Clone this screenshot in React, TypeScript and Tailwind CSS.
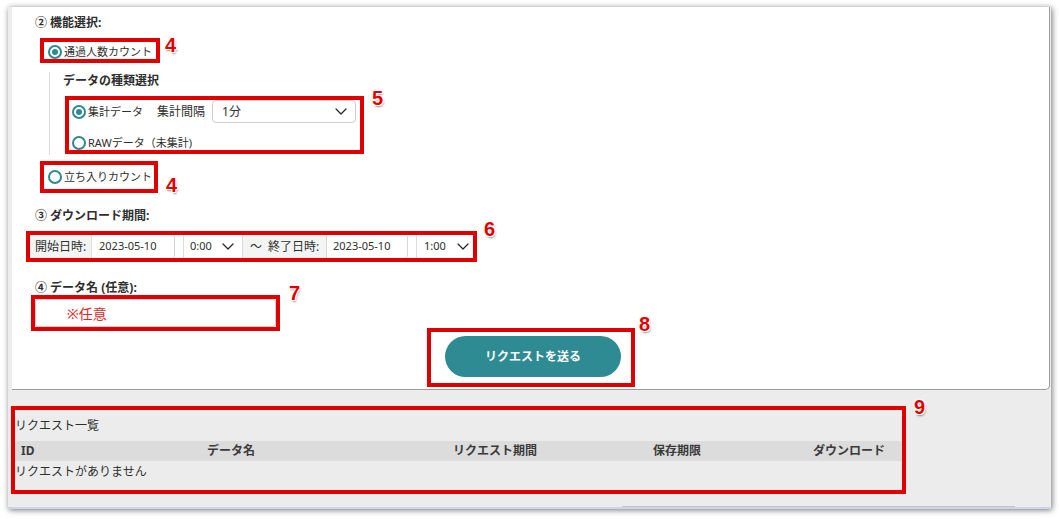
import { ReactNode } from "react";

/* 赤枠の番号 */
function Num({ n, className }: { n: string; className: string }) {
  return (
    <span
      className={
        "absolute font-['Liberation_Sans',Arial,sans-serif] text-[20px] leading-[20px] font-bold text-[#e00000] [text-shadow:-1px_-1px_0_#fff,1px_-1px_0_#fff,-1px_1px_0_#fff,1px_1px_0_#fff,1px_2px_2px_rgba(0,0,0,0.45)] " +
        className
      }
    >
      {n}
    </span>
  );
}

function Radio({ checked }: { checked?: boolean }) {
  return (
    <span className="flex h-[14px] w-[14px] shrink-0 items-center justify-center rounded-full border-2 border-[#2d8a92] bg-white">
      {checked && <span className="h-[6px] w-[6px] rounded-full bg-[#2d8a92]" />}
    </span>
  );
}

function Chevron() {
  return (
    <svg width="12" height="7" viewBox="0 0 12 7" fill="none">
      <path d="M1 1l5 5 5-5" stroke="#222" strokeWidth="1.2" strokeLinecap="round" strokeLinejoin="round" />
    </svg>
  );
}

function Title({ children, className }: { children: ReactNode; className: string }) {
  return <div className={"text-[12px] leading-[16px] font-bold text-[#2e2e2e] " + className}>{children}</div>;
}

function App() {
  return (
    <div className="h-[519px] w-[1059px] overflow-hidden bg-white pt-[7px] pl-[8px] font-['Noto_Sans','Noto_Sans_CJK_JP',sans-serif] text-[#2e2e2e]">
      <div className="flex h-[502px] w-[1043px] flex-col bg-[#ececec] shadow-[1px_1px_6px_rgba(0,0,0,0.55)]">
        {/* form card */}
        <div className="ml-[4px] flex h-[383px] w-[1038px] shrink-0 flex-col rounded-br-[5px] border-r border-b border-[#9c9c9c] bg-white">
          <Title className="mt-[8px] ml-[23px]">② 機能選択:</Title>

          <div className="relative mt-[7px] ml-[28px] flex h-[25px] w-[120px] items-center border-4 border-[#e00000] pt-[3px] pl-[4px]">
            <Radio checked />
            <span className="ml-[2px] text-[11px] leading-[14px]">通過人数カウント</span>
            <Num n="4" className="top-[-7px] left-[calc(100%+9px)]" />
          </div>

          <div className="mt-[9px] ml-[37px] h-[83px] border-l border-[#dcdcdc] pl-[13px]">
            <Title className="mt-[1px]">データの種類選択</Title>
            <div className="relative mt-[7px] ml-[2px] flex h-[58px] w-[299px] flex-col border-4 border-[#e00000] pl-[3px]">
              <div className="flex h-[23px] items-center">
                <Radio checked />
                <span className="ml-[2px] text-[11px] leading-[14px]">集計データ</span>
                <span className="ml-[14px] text-[12px] leading-[14px]">集計間隔</span>
                <div className="ml-[7px] flex h-[23px] w-[144px] items-center justify-between rounded-[4px] border border-[#cfcfcf] pr-[8px] pl-[9px]">
                  <span className="text-[12px]">1分</span>
                  <Chevron />
                </div>
              </div>
              <div className="mt-[13px] flex h-[14px] items-center">
                <Radio />
                <span className="ml-[2px] text-[11px] leading-[14px]">RAWデータ（未集計)</span>
              </div>
              <Num n="5" className="top-[-12px] left-[calc(100%+12px)]" />
            </div>
          </div>

          <div className="relative mt-[6px] ml-[28px] flex h-[32px] w-[118px] items-center border-4 border-[#e00000] pl-[4px]">
            <Radio />
            <span className="ml-[2px] text-[11px] leading-[14px]">立ち入りカウント</span>
            <Num n="4" className="top-[10px] left-[calc(100%+12px)]" />
          </div>

          <Title className="mt-[15px] ml-[23px]">③ ダウンロード期間:</Title>

          <div className="relative mt-[7px] ml-[14px] flex h-[31px] w-[451px] border-4 border-[#e00000]">
            <div className="flex w-[62px] items-center border-r border-[#dcdcdc] bg-[#f4f4f4] pl-[5px] text-[12px]">開始日時:</div>
            <div className="flex w-[83px] items-center rounded-r-[3px] border-r border-[#d6d6d6] pl-[7px] text-[11px]">2023-05-10</div>
            <div className="w-[8px]" />
            <div className="flex w-[59px] items-center justify-between border-l border-[#dcdcdc] pr-[8px] pl-[6px] text-[11px]">
              <span>0:00</span>
              <Chevron />
            </div>
            <div className="flex w-[84px] items-center border-l border-[#dcdcdc] bg-[#f4f4f4] pl-[7px] text-[12px]">
              <span>〜</span>
              <span className="ml-[6px]">終了日時:</span>
            </div>
            <div className="flex w-[82px] items-center rounded-r-[3px] border-x border-[#d6d6d6] pl-[6px] text-[11px]">2023-05-10</div>
            <div className="w-[8px]" />
            <div className="flex flex-1 items-center justify-between border-l border-[#dcdcdc] pr-[4px] pl-[7px] text-[11px]">
              <span>1:00</span>
              <Chevron />
            </div>
            <Num n="6" className="top-[-16px] left-[calc(100%+11px)]" />
          </div>

          <Title className="mt-[18px] ml-[23px]">④ データ名 (任意):</Title>

          <div className="relative mt-[-1px] ml-[19px] h-[36px] w-[249px] border-4 border-[#e00000]">
            <div className="flex h-full items-center rounded-[3px] border border-[#cfcfcf] pl-[31px] text-[14px] text-[#e02424]">
              ※任意
            </div>
            <Num n="7" className="top-[-16px] left-[calc(100%+13px)]" />
          </div>

          <div className="relative mt-[-3px] ml-[415px] h-[59px] w-[208px] border-4 border-[#e00000] pt-[4px] pl-[14px]">
            <button className="flex h-[41px] w-[176px] items-center justify-center rounded-full bg-[#2e8a93] text-[12px] font-bold text-white">
              リクエストを送る
            </button>
            <Num n="8" className="top-[-18px] left-[calc(100%+8px)]" />
          </div>
        </div>

        {/* request list */}
        <div className="relative mt-[16px] ml-[3px] h-[88px] w-[895px] shrink-0 border-4 border-[#e00000] text-[12px]">
          <div className="mt-[8px] leading-[16px]">リクエスト一覧</div>
          <div className="mt-[7px] grid h-[20px] grid-cols-[186px_246px_200px_160px_1fr] items-center bg-[#dcdcdc] pl-[6px] font-bold text-[#3a3a3a]">
            <span>ID</span>
            <span>データ名</span>
            <span>リクエスト期間</span>
            <span>保存期限</span>
            <span>ダウンロード</span>
          </div>
          <div className="mt-[3px] leading-[16px]">リクエストがありません</div>
          <Num n="9" className="top-[-13px] left-[calc(100%+12px)]" />
        </div>

        <div className="flex-1" />
        <div className="ml-[614px] h-px w-[393px] bg-[#c4c4c4]" />
        <div className="h-[2px] bg-[#c9d5ea]" />
      </div>
    </div>
  );
}

export default App;
